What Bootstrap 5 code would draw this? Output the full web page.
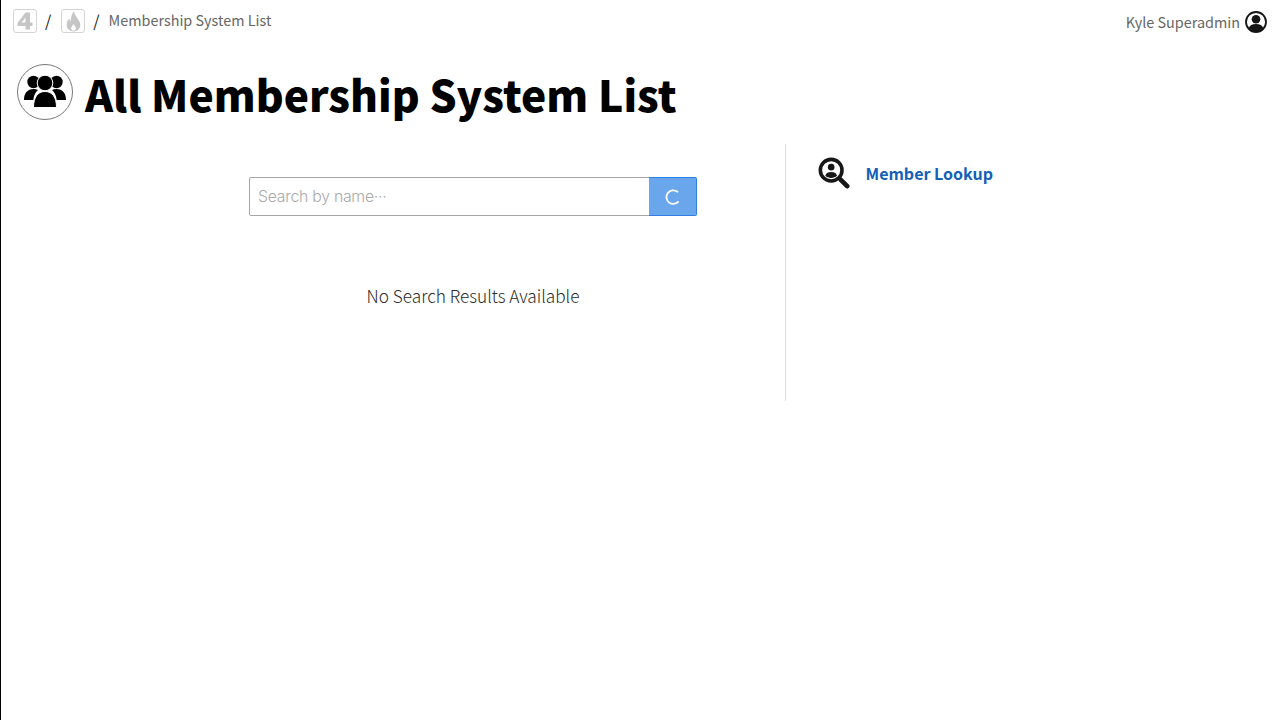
<!DOCTYPE html>
<html lang="en">
<head>
<meta charset="utf-8">
<title>All Membership System List</title>
<link href="https://cdn.jsdelivr.net/npm/bootstrap@5.3.0/dist/css/bootstrap.min.css" rel="stylesheet">
<style>
html,body{height:100%}
body{font-family:"Noto Sans CJK JP","Liberation Sans",sans-serif;background:#fff;border-left:1px solid #000;overflow:hidden}
.topline{height:44px;padding:9px 13px 0 12px}
.tile{width:24px;height:24px;border:1px solid #d4d4d4;border-radius:3px}
.tile svg{display:block}
.sep{font-size:16px;color:#222;line-height:24px;margin:-1px 10px 0 8px}
.crumb{font-size:14.400px;color:#666;line-height:24px;margin-left:-1px;margin-top:-1px}
.who{font-size:14.400px;color:#666;line-height:26px}
.whoicon{margin:2px 0 0 5px}
.headline{padding:20px 0 0 16px;height:100px}
.disc{width:56px;height:56px;border:1px solid #777;border-radius:50%}
.bigtitle{font-size:42.550px;font-weight:900;color:#000;line-height:60px;margin:0 0 0 12px}
.leftpane{width:785px;height:257px;border-right:1px solid #ddd;padding:33px 0 0 160px}
.searchbox{width:448px;height:39px}
.searchbox .form-control{font-family:Inter,"Noto Sans CJK JP",sans-serif;font-weight:300;font-size:15.800px;letter-spacing:-.25px;color:#333;height:39px;border:1px solid #a6a6a6;border-radius:2px 0 0 2px;padding:0 8px}
.searchbox .form-control::placeholder{color:#a9a9a9}
.spinbtn{width:48px;height:39px;background:#6aa6ec;border:1px solid #2f80e4;border-left:0;border-radius:0 2px 2px 0;padding:0}
.nores{font-size:17.240px;font-weight:300;color:#2a2a2a;text-align:center;margin:65px 0 0;line-height:30px}
.rightpane{padding:12px 0 0 32px}
.lensicon{margin-top:1px}
.lookup{font-size:16px;font-weight:700;color:#1360b8;text-decoration:none;line-height:34px;margin-left:15.500px}
</style>
</head>
<body>
<div class="topline d-flex justify-content-between">
  <div class="d-flex align-items-start">
    <span class="tile d-flex align-items-center justify-content-center">
      <svg width="22" height="22" viewBox="0 0 22 22"><path fill="#c6c6c6" fill-rule="evenodd" d="M11.500 2.500h4.500v10h2.500v3.500H16v3.500h-4.500V16H3.500v-3zM11.500 7.500 7.600 12.500h3.900z"/></svg>
    </span>
    <span class="sep">/</span>
    <span class="tile d-flex align-items-center justify-content-center">
      <svg width="17" height="21" viewBox="0 0 16 20"><path fill="#c6c6c6" fill-rule="evenodd" d="M8.500 0c.5 3.500 2 5 3.300 7.200 1.200 1.800 2.700 3.500 2.700 6 0 3.900-2.800 6.300-6.500 6.300s-6.500-2.400-6.500-6.300c0-2.500 1-4.300 2.500-6 .2 1.300.6 2.200 1.300 3 0-4 1.200-7.700 3.200-10.200zM8 12.500c-1.400 1.500-2.300 2.600-2.300 4 0 1.300 1 2.200 2.300 2.200s2.300-.9 2.300-2.200c0-1.400-.9-2.500-2.300-4z"/></svg>
    </span>
    <span class="sep">/</span>
    <span class="crumb">Membership System List</span>
  </div>
  <div class="d-flex align-items-start">
    <span class="who">Kyle Superadmin</span>
    <svg class="whoicon" width="22" height="22" viewBox="0 0 22 22" aria-hidden="true"><circle cx="11" cy="11" r="10" fill="#fff" stroke="#151515" stroke-width="1.800"/><circle cx="11" cy="8.200" r="4.300" fill="#151515"/><path fill="#151515" d="M3.500 17.500c1-3.300 3.600-4.500 7.500-4.500s6.500 1.200 7.500 4.500c-1.800 2.200-4.500 3.500-7.500 3.500s-5.700-1.300-7.500-3.500z"/></svg>
  </div>
</div>

<div class="headline d-flex align-items-start">
  <span class="disc d-flex align-items-center justify-content-center">
    <svg width="44" height="34" viewBox="0 0 44 34" aria-hidden="true"><circle cx="10.500" cy="7" r="6.200" fill="#000"/><circle cx="33.500" cy="7" r="6.200" fill="#000"/><path fill="#000" d="M1 25c0-7 3.500-11 9.500-11 1.800 0 3.300.3 4.500 1-2.500 2-4.200 5.500-4.700 10z"/><path fill="#000" d="M43 25c0-7-3.500-11-9.500-11-1.800 0-3.300.3-4.500 1 2.500 2 4.200 5.500 4.700 10z"/><circle cx="22" cy="8" r="7.800" fill="#000" stroke="#fff" stroke-width="1"/><path fill="#000" stroke="#fff" stroke-width="1" d="M10.500 32.500c0-10 4-16 11.500-16s11.500 6 11.500 16z"/></svg>
  </span>
  <h1 class="bigtitle">All Membership System List</h1>
</div>

<div class="d-flex">
  <div class="leftpane">
    <div class="searchbox input-group flex-nowrap mx-auto">
      <input type="text" class="form-control" placeholder="Search by name···">
      <button type="button" class="spinbtn btn d-flex align-items-center justify-content-center" aria-label="Search">
        <svg width="16" height="16" viewBox="0 0 16 16" aria-hidden="true"><path fill="none" stroke="#fff" stroke-width="1.800" stroke-linecap="round" d="M12.500 2.800A6.800 6.800 0 1 0 13 13"/></svg>
      </button>
    </div>
    <p class="nores">No Search Results Available</p>
  </div>
  <div class="rightpane d-flex align-items-start">
    <svg class="lensicon" width="32" height="32" viewBox="0 0 34 34" aria-hidden="true"><circle cx="14" cy="14" r="11.500" fill="#fff" stroke="#171717" stroke-width="3.800"/><circle cx="14" cy="10.800" r="3.500" fill="#171717"/><path fill="#171717" d="M7.800 20c.7-3 3-4 6.200-4s5.500 1 6.200 4c-1.600 1.500-3.800 2.300-6.200 2.300S9.400 21.500 7.800 20z"/><path stroke="#171717" stroke-width="5" stroke-linecap="round" d="M24 24l7 7"/></svg>
    <a class="lookup" href="#">Member Lookup</a>
  </div>
</div>
<script src="https://cdn.jsdelivr.net/npm/bootstrap@5.3.0/dist/js/bootstrap.bundle.min.js"></script>
</body>
</html>
